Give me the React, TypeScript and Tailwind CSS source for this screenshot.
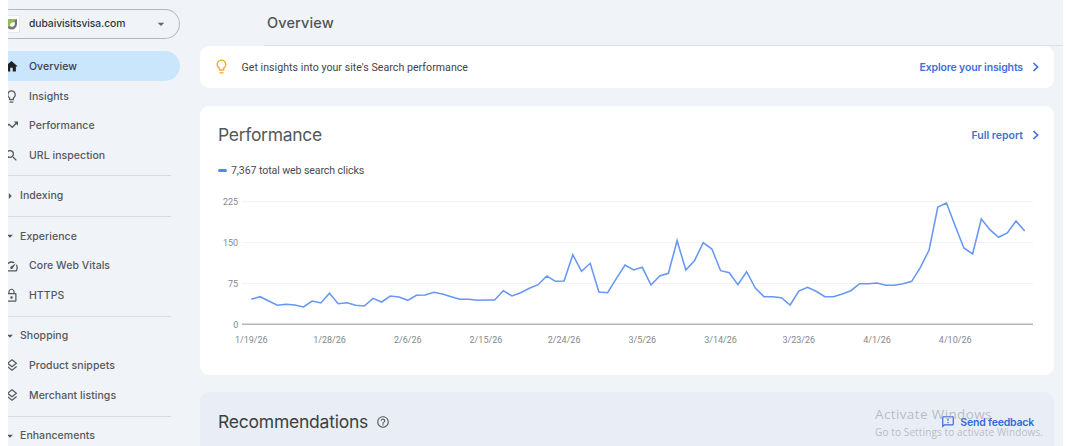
import type { ReactNode } from "react";
import {
  MdArrowDropDown,
  MdArrowRight,
  MdHelpOutline,
  MdHome,
  MdLightbulbOutline,
  MdLockOutline,
  MdOutlineFeedback,
  MdSearch,
  MdSpeed,
} from "react-icons/md";

const STEP = 8.69;
const START_X = 51.3;

// Vertical position of each daily value inside the chart drawing.
const points = [
  109.3, 106.7, 111, 115.3, 114.3, 115, 117, 111, 113, 103.3, 113.7, 112.7, 115.3, 116, 108.3,
  112, 106, 107, 110.3, 105.3, 105, 102.3, 104, 106.7, 109.3, 109.3, 110.3, 110, 110, 100.7,
  106, 102.7, 98.3, 94.7, 86, 91.3, 91, 64.7, 81.3, 73.3, 102, 102.7, 88.7, 75, 80,
  77.3, 95, 86, 83.3, 50.7, 80, 70.7, 52.7, 59, 80.7, 82.7, 94.7, 81.7, 98, 106.7,
  106.7, 107.7, 115, 101, 97.3, 101.3, 106.7, 106.7, 104, 100.7, 93.7, 93.7, 93, 95.3, 95.3,
  93.7, 91.3, 77.3, 60, 17, 13, 36, 58, 64, 29, 39.7, 47.3, 43, 31, 41,
];

const dates = ["1/19/26", "1/28/26", "2/6/26", "2/15/26", "2/24/26", "3/5/26", "3/14/26", "3/23/26", "4/1/26", "4/10/26"];

const ticks = [
  { label: "225", y: 11.7 },
  { label: "150", y: 52.5 },
  { label: "75", y: 93.5 },
];

function NavItem({ icon, label, active = false }: { icon: ReactNode; label: string; active?: boolean }) {
  return (
    <div
      className={
        active
          ? "flex h-[29.6px] w-[172px] shrink-0 items-center rounded-r-full bg-[#c9e6fc] text-[#3c4043]"
          : "flex h-[29.6px] w-[172px] shrink-0 items-center text-[#55585b]"
      }
    >
      <span className="-ml-[4.5px] flex w-[25.5px] shrink-0 pt-[1.5px] text-[15px]">{icon}</span>
      <span className="pt-[2px] whitespace-nowrap">{label}</span>
    </div>
  );
}

function NavGroup({ label, open = true, children }: { label: string; open?: boolean; children?: ReactNode }) {
  return (
    <>
      <div className="mt-[6px] mb-[4px] h-px w-[163px] shrink-0 bg-[#d9dcdf]" />
      <div className="flex h-[29.6px] shrink-0 items-center text-[#55585b]">
        <span className="-ml-[5px] flex w-[17px] shrink-0 pt-px text-[14px]">{open ? <MdArrowDropDown /> : <MdArrowRight />}</span>
        <span className="pt-[1.5px] whitespace-nowrap">{label}</span>
      </div>
      {children}
    </>
  );
}

function Chevron() {
  return (
    <svg viewBox="0 0 8 10" className="h-[10px] w-[8px]" fill="none" stroke="currentColor" strokeWidth="1.7">
      <path d="M1.5 1 5.6 5 1.5 9" />
    </svg>
  );
}

function TrendIcon() {
  return (
    <svg viewBox="0 0 15 15" className="h-[15px] w-[15px]" fill="none" stroke="currentColor" strokeWidth="1.300">
      <path d="M1.500 9.300 5 6.300 8.200 9.300 12.500 5" />
      <path d="M9.800 3.500H14V7.700Z" fill="currentColor" stroke="none" />
    </svg>
  );
}

function LayersIcon() {
  return (
    <svg viewBox="0 0 15 15" className="h-[15px] w-[15px]" fill="none" stroke="currentColor" strokeWidth="1.200">
      <path d="M8 1.800 12.400 5.300 8 8.800 3.600 5.300Z" />
      <path d="M3.400 8.500 8 12.200 12.600 8.500" />
    </svg>
  );
}

function SiteLogo() {
  return (
    <svg viewBox="0 0 18 18" className="-ml-[6px] h-[18px] w-[18px] shrink-0">
      <rect x="0.5" y="0.5" width="17" height="17" fill="#fff" stroke="#e6e8eb" />
      <path d="M4 4H15V9A5.500 5.500 0 0 1 4 9Z" fill="#73777a" />
      <path d="M4 4H14.500L11 7.500 8 11.500H4Z" fill="#91bf4d" />
      <path d="M12.800 7V9.300A2.700 2.700 0 0 1 7.800 10.500C7.800 8.500 10 7 12.800 7Z" fill="#fff" />
    </svg>
  );
}

function Chart() {
  const line = points.map((y, i) => `${(START_X + i * STEP).toFixed(1)},${y}`).join(" ");
  return (
    <svg viewBox="0 0 854 160" className="h-[160px] w-[854px] font-[Roboto,sans-serif] text-[9px]">
      {ticks.map((t) => (
        <g key={t.label}>
          <line x1="42" x2="833" y1={t.y} y2={t.y} stroke="#f3f3f3" />
          <text x="38.200" y={t.y + 3.3} textAnchor="end" fill="#85888b">{t.label}</text>
        </g>
      ))}
      <line x1="42" x2="833" y1="134.300" y2="134.300" stroke="#b5b5b5" strokeWidth="1.500" />
      <text x="38.200" y="137.600" textAnchor="end" fill="#85888b">0</text>
      <polyline points={line} fill="none" stroke="#6797f5" strokeWidth="1.550" />
      {dates.map((d, i) => (
        <text key={d} x={START_X + i * 9 * STEP} y="153" textAnchor="middle" fill="#85888b">{d}</text>
      ))}
    </svg>
  );
}

export default function App() {
  return (
    <div className="h-[446px] w-[1066px] overflow-hidden bg-white pr-[3px] pl-[8px] font-[Inter,sans-serif]">
      <div className="flex h-full overflow-hidden bg-[#f0f4f9]">
        <nav className="flex w-[192px] shrink-0 flex-col overflow-hidden pt-[8.5px] text-[10.5px] font-medium tracking-[0.05px]">
          <div className="mb-[12px] flex h-[30.5px] w-[172px] shrink-0 items-center rounded-r-full border border-l-0 border-[#b5b8bb] text-[#303438]">
            <SiteLogo />
            <span className="ml-[9px] text-[10.300px] tracking-[-0.06px]">dubaivisitsvisa.com</span>
            <MdArrowDropDown className="mr-[10px] ml-auto text-[16px] text-[#65686b]" />
          </div>
          <NavItem active icon={<MdHome className="text-[#202124]" />} label="Overview" />
          <NavItem icon={<MdLightbulbOutline />} label="Insights" />
          <NavItem icon={<TrendIcon />} label="Performance" />
          <NavItem icon={<MdSearch />} label="URL inspection" />
          <NavGroup label="Indexing" open={false} />
          <NavGroup label="Experience">
            <NavItem icon={<MdSpeed />} label="Core Web Vitals" />
            <NavItem icon={<MdLockOutline />} label="HTTPS" />
          </NavGroup>
          <NavGroup label="Shopping">
            <NavItem icon={<LayersIcon />} label="Product snippets" />
            <NavItem icon={<LayersIcon />} label="Merchant listings" />
          </NavGroup>
          <NavGroup label="Enhancements" />
        </nav>

        <main className="flex min-w-0 flex-1 flex-col">
          <header className="ml-[64px] flex h-[46px] shrink-0 items-center border-b border-[#dcdfe3] pl-[3px]">
            <h1 className="pt-[1px] text-[14.500px] font-medium tracking-[0.12px] text-[#505356]">Overview</h1>
          </header>

          <div className="flex w-[854px] flex-col">
            <section className="flex h-[41.500px] items-center rounded-[9px] bg-white pr-[14px] pl-[13px]">
              <MdLightbulbOutline className="text-[17px] text-[#f2ac33]" />
              <p className="ml-[11.500px] pt-[2px] font-[Roboto,sans-serif] text-[10.600px] tracking-[0.04px] text-[#404347]">
                Get insights into your site's Search performance
              </p>
              <a className="ml-auto flex items-center gap-[9px] text-[10.500px] font-semibold tracking-[-0.14px] text-[#4370d8]">
                <span className="pt-[2px]">Explore your insights</span> <Chevron />
              </a>
            </section>

            <section className="mt-[18px] flex h-[269px] flex-col rounded-[9px] bg-white">
              <div className="flex h-[58px] items-center justify-between pr-[14px] pl-[18px]">
                <h2 className="pt-[2px] text-[17.500px] tracking-[-0.3px] text-[#55585b]">Performance</h2>
                <a className="flex items-center gap-[9px] text-[10.500px] font-semibold text-[#4370d8]">
                  <span className="pt-[2px]">Full report</span> <Chevron />
                </a>
              </div>
              <div className="flex h-[14px] items-center gap-[4px] pl-[18px]">
                <span className="h-[3px] w-[9px] rounded-full bg-[#5088f4]" />
                <span className="pt-px font-[Roboto,sans-serif] text-[10.600px] tracking-[-0.1px] text-[#484b4f]">7,367 total web search clicks</span>
              </div>
              <div className="mt-[12.500px]">
                <Chart />
              </div>
            </section>

            <section className="relative mt-[17px] flex h-[72px] shrink-0 items-start rounded-t-[9px] bg-[#e9eef6] pt-[16px] pl-[18px]">
              <h2 className="text-[17.500px] leading-[27px] tracking-[-0.23px] text-[#3c3f42]">Recommendations</h2>
              <MdHelpOutline className="mt-[7px] ml-[8px] text-[14px] text-[#5a5d60]" />
              <a className="mt-[7px] mr-[20px] ml-auto flex items-center gap-[5px] text-[10.500px] font-semibold tracking-[-0.2px] text-[#3468d6]">
                <MdOutlineFeedback className="text-[14px]" /> Send feedback
              </a>
              <div className="pointer-events-none absolute top-[13px] left-[675px] font-['Open_Sans',sans-serif] whitespace-nowrap text-[#a8abb0]/75">
                <div className="text-[13.500px] leading-[18px] tracking-[0.38px]">Activate Windows</div>
                <div className="text-[10px] leading-[18px] tracking-[0.12px]">Go to Settings to activate Windows.</div>
              </div>
            </section>
          </div>
        </main>
      </div>
    </div>
  );
}
